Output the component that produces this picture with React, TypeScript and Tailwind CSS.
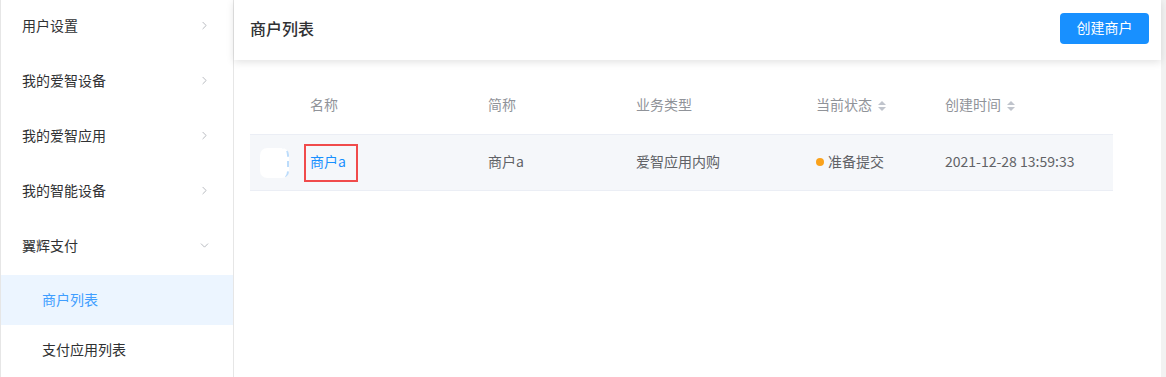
import { ChevronRight, ChevronDown } from "lucide-react";

interface MenuItem {
  label: string;
  open?: boolean;
  children?: { label: string; active?: boolean }[];
}

const menu: MenuItem[] = [
  { label: "用户设置" },
  { label: "我的爱智设备" },
  { label: "我的爱智应用" },
  { label: "我的智能设备" },
  {
    label: "翼辉支付",
    open: true,
    children: [{ label: "商户列表", active: true }, { label: "支付应用列表" }],
  },
];

const font = { fontFamily: '"Noto Sans CJK SC", "Noto Sans", sans-serif' };

function SortIcon() {
  return (
    <span className="ml-[6px] inline-flex flex-col gap-[2px] pt-[3px]">
      <span className="block h-0 w-0 border-x-[4px] border-b-[4px] border-x-transparent border-b-[#c0c4cc]" />
      <span className="block h-0 w-0 border-x-[4px] border-t-[4px] border-x-transparent border-t-[#c0c4cc]" />
    </span>
  );
}

function Sidebar() {
  return (
    <aside className="w-[234px] shrink-0 border-l border-r border-[#e6e6e6] bg-white">
      {menu.map((item) => (
        <div key={item.label}>
          <div className="flex h-[55px] items-center justify-between pb-[5px] pl-[21px] pr-[22px] text-[14px] text-[#303133]">
            <span>{item.label}</span>
            {item.open ? (
              <ChevronDown className="h-[13px] w-[13px] text-[#a8abb2]" strokeWidth={1.5} />
            ) : (
              <ChevronRight className="h-[13px] w-[13px] text-[#a8abb2]" strokeWidth={1.5} />
            )}
          </div>
          {item.children?.map((c) => (
            <div
              key={c.label}
              className={
                c.active
                  ? "flex h-[50px] items-center bg-[#ecf5ff] pb-[2px] pl-[41px] text-[14px] text-[#409eff]"
                  : "flex h-[50px] items-center pb-[2px] pl-[41px] text-[14px] text-[#303133]"
              }
            >
              {c.label}
            </div>
          ))}
        </div>
      ))}
    </aside>
  );
}

export default function App() {
  return (
    <div className="flex h-[377px] w-[1166px] overflow-hidden bg-white" style={font}>
      <Sidebar />
      <main className="flex min-w-0 flex-1 flex-col">
        <header className="relative z-10 flex h-[60px] shrink-0 items-center justify-between pb-[3px] pl-[16px] pr-[12px] shadow-[0_2px_8px_rgba(0,0,0,0.12)]">
          <h1 className="pb-[2px] text-[16px] font-medium text-[#303133]">商户列表</h1>
          <button className="h-[31px] w-[89px] rounded-[4px] bg-[#1890ff] pb-[2px] text-[14px] text-white">
            创建商户
          </button>
        </header>

        <div className="pl-[16px] pt-[20px]">
          <div className="w-[863px] text-[14px]">
            <div className="grid h-[54px] grid-cols-[50px_178px_148px_180px_129px_178px] items-center pb-[5px] text-[#909399]">
              <div />
              <div className="px-[10px]">名称</div>
              <div className="px-[10px]">简称</div>
              <div className="px-[10px]">业务类型</div>
              <div className="flex items-center px-[10px]">
                当前状态
                <SortIcon />
              </div>
              <div className="flex items-center px-[10px]">
                创建时间
                <SortIcon />
              </div>
            </div>
            <div className="grid h-[57px] grid-cols-[50px_178px_148px_180px_129px_178px] items-center border-y border-[#ebeef5] bg-[#f5f7fa] text-[#606266]">
              <div className="pl-[10px]">
                <div className="h-[30px] w-[29px] rounded-[7px] border-r-2 border-dashed border-r-[#bcdcfb] bg-white" />
              </div>
              <div className="pl-[4px]">
                <span className="inline-flex h-[38px] w-[54px] items-center border-2 border-[#f04b4b] pb-[3px] pl-[4px] text-[#1890ff]">
                  商户a
                </span>
              </div>
              <div className="px-[10px] pb-[3px]">商户a</div>
              <div className="px-[10px] pb-[3px]">爱智应用内购</div>
              <div className="flex items-center px-[10px] pb-[3px]">
                <span className="mr-[4px] mt-[2px] h-[8px] w-[8px] rounded-full bg-[#faa21b]" />
                准备提交
              </div>
              <div className="px-[10px] pb-[3px]">2021-12-28 13:59:33</div>
            </div>
          </div>
        </div>
      </main>
      <div className="w-[5px] shrink-0 bg-[#f2f2f2]" />
    </div>
  );
}
